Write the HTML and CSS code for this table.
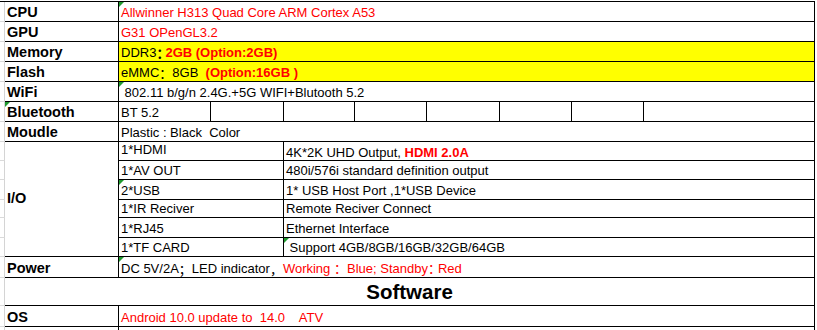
FILE: index.html
```html
<!DOCTYPE html>
<html>
<head>
<meta charset="utf-8">
<link rel="stylesheet" href="styles.css">
</head>
<body>
<div class="sheet">
  <div class="m"></div><div class="c lab">CPU</div><div class="c s8 red mk">Allwinner H313 Quad Core ARM Cortex A53</div>
  <div class="m"></div><div class="c lab">GPU</div><div class="c s8 red">G31 OPenGL3.2</div>
  <div class="m"></div><div class="c lab">Memory</div><div class="c s8 yel">DDR3<b class="fw n4">：</b><b class="red">2GB (Option:2GB)</b></div>
  <div class="m"></div><div class="c lab">Flash</div><div class="c s8 yel">eMMC<span class="fw">：</span>8GB  <b class="red">(Option:16GB )</b></div>
  <div class="m"></div><div class="c lab">WiFi</div><div class="c s8 mk"> 802.11 b/g/n 2.4G.+5G WIFI+Blutooth 5.2</div>
  <div class="m"></div><div class="c lab mk">Bluetooth</div><div class="c">BT 5.2</div><div class="c"></div><div class="c"></div><div class="c"></div><div class="c"></div><div class="c"></div><div class="c"></div><div class="c"></div>
  <div class="m"></div><div class="c lab">Moudle</div><div class="c s8">Plastic : Black  Color</div>
  <div class="m"></div><div class="c lab io">I/O</div><div class="c s2 up">1*HDMI</div><div class="c s6 dn">4K*2K UHD Output, <b class="red">HDMI 2.0A</b></div>
  <div class="m"></div><div class="c s2">1*AV OUT</div><div class="c s6">480i/576i standard definition output</div>
  <div class="m"></div><div class="c s2 mk">2*USB</div><div class="c s6">1* USB Host Port ,1*USB Device</div>
  <div class="m"></div><div class="c s2">1*IR Reciver</div><div class="c s6">Remote Reciver Connect</div>
  <div class="m"></div><div class="c s2">1*RJ45</div><div class="c s6">Ethernet Interface</div>
  <div class="m"></div><div class="c s2">1*TF CARD</div><div class="c s6 mk"> Support 4GB/8GB/16GB/32GB/64GB</div>
  <div class="m"></div><div class="c lab">Power</div><div class="c s8 mk">DC 5V/2A<span class="fw">；</span>LED indicator<span class="fw">，</span><span class="red">Working <span class="fw">：</span>Blue; Standby<span class="fw n3">：</span>Red</span></div>
  <div class="m"></div><div class="c s9 sw">Software</div>
  <div class="m"></div><div class="c lab">OS</div><div class="c s8 red">Android 10.0 update to  14.0    ATV</div>
  <div class="m open"></div><div class="c lab open"></div><div class="c s8 open"></div>
</div>
</body>
</html>
```
FILE: styles.css
```css
html, body {
  margin: 0;
  padding: 0;
  background: #fff;
}
.sheet {
  margin-top: 1px;
  border-top: 1px solid #000;
  display: grid;
  grid-template-columns: 5px 114px 92px 73px 71px 72px 73px 72px 72px 171px;
  grid-template-rows: 20px 20px 20px 20px 20px 20px 20px 19px 19px 20px 18px 20px 19px 21px 28px 21px 3px;
  width: 815px;
  font-family: "Liberation Sans", Arial, "Noto Sans CJK SC", sans-serif;
  font-size: 13px;
  color: #000;
}
.m {
  border-right: 1px solid #d4d4d4;
  border-bottom: 1px solid #dadada;
}
.c {
  box-sizing: border-box;
  border-right: 1px solid #000;
  border-bottom: 1px solid #000;
  display: flex;
  align-items: flex-end;
  padding: 0 0 1px 2px;
  line-height: 15px;
  white-space: pre;
  overflow: hidden;
}
.open { border-bottom: none; padding: 0; }
.s2 { grid-column: span 2; }
.s6 { grid-column: span 6; }
.s8 { grid-column: span 8; }
.s9 { grid-column: span 9; }
.lab {
  font-weight: bold;
  font-size: 14.5px;
}
.io {
  grid-row: span 6;
  align-items: center;
}
.red { color: #ff0000; }
.yel { background: #ffff00; }
.fw { font-family: "Noto Sans CJK SC", sans-serif; }
.n4 { letter-spacing: -4px; }
.n3 { letter-spacing: -3px; }
.up { padding-bottom: 3px; }
.dn { padding-bottom: 0; }
.sw {
  justify-content: center;
  font-weight: bold;
  font-size: 20.5px;
  line-height: 24px;
  padding-left: 0;
}
.mk { position: relative; }
.mk::before {
  content: "";
  position: absolute;
  left: 0;
  top: 0;
  border-top: 5px solid #1f9a2e;
  border-right: 5px solid transparent;
}
```
